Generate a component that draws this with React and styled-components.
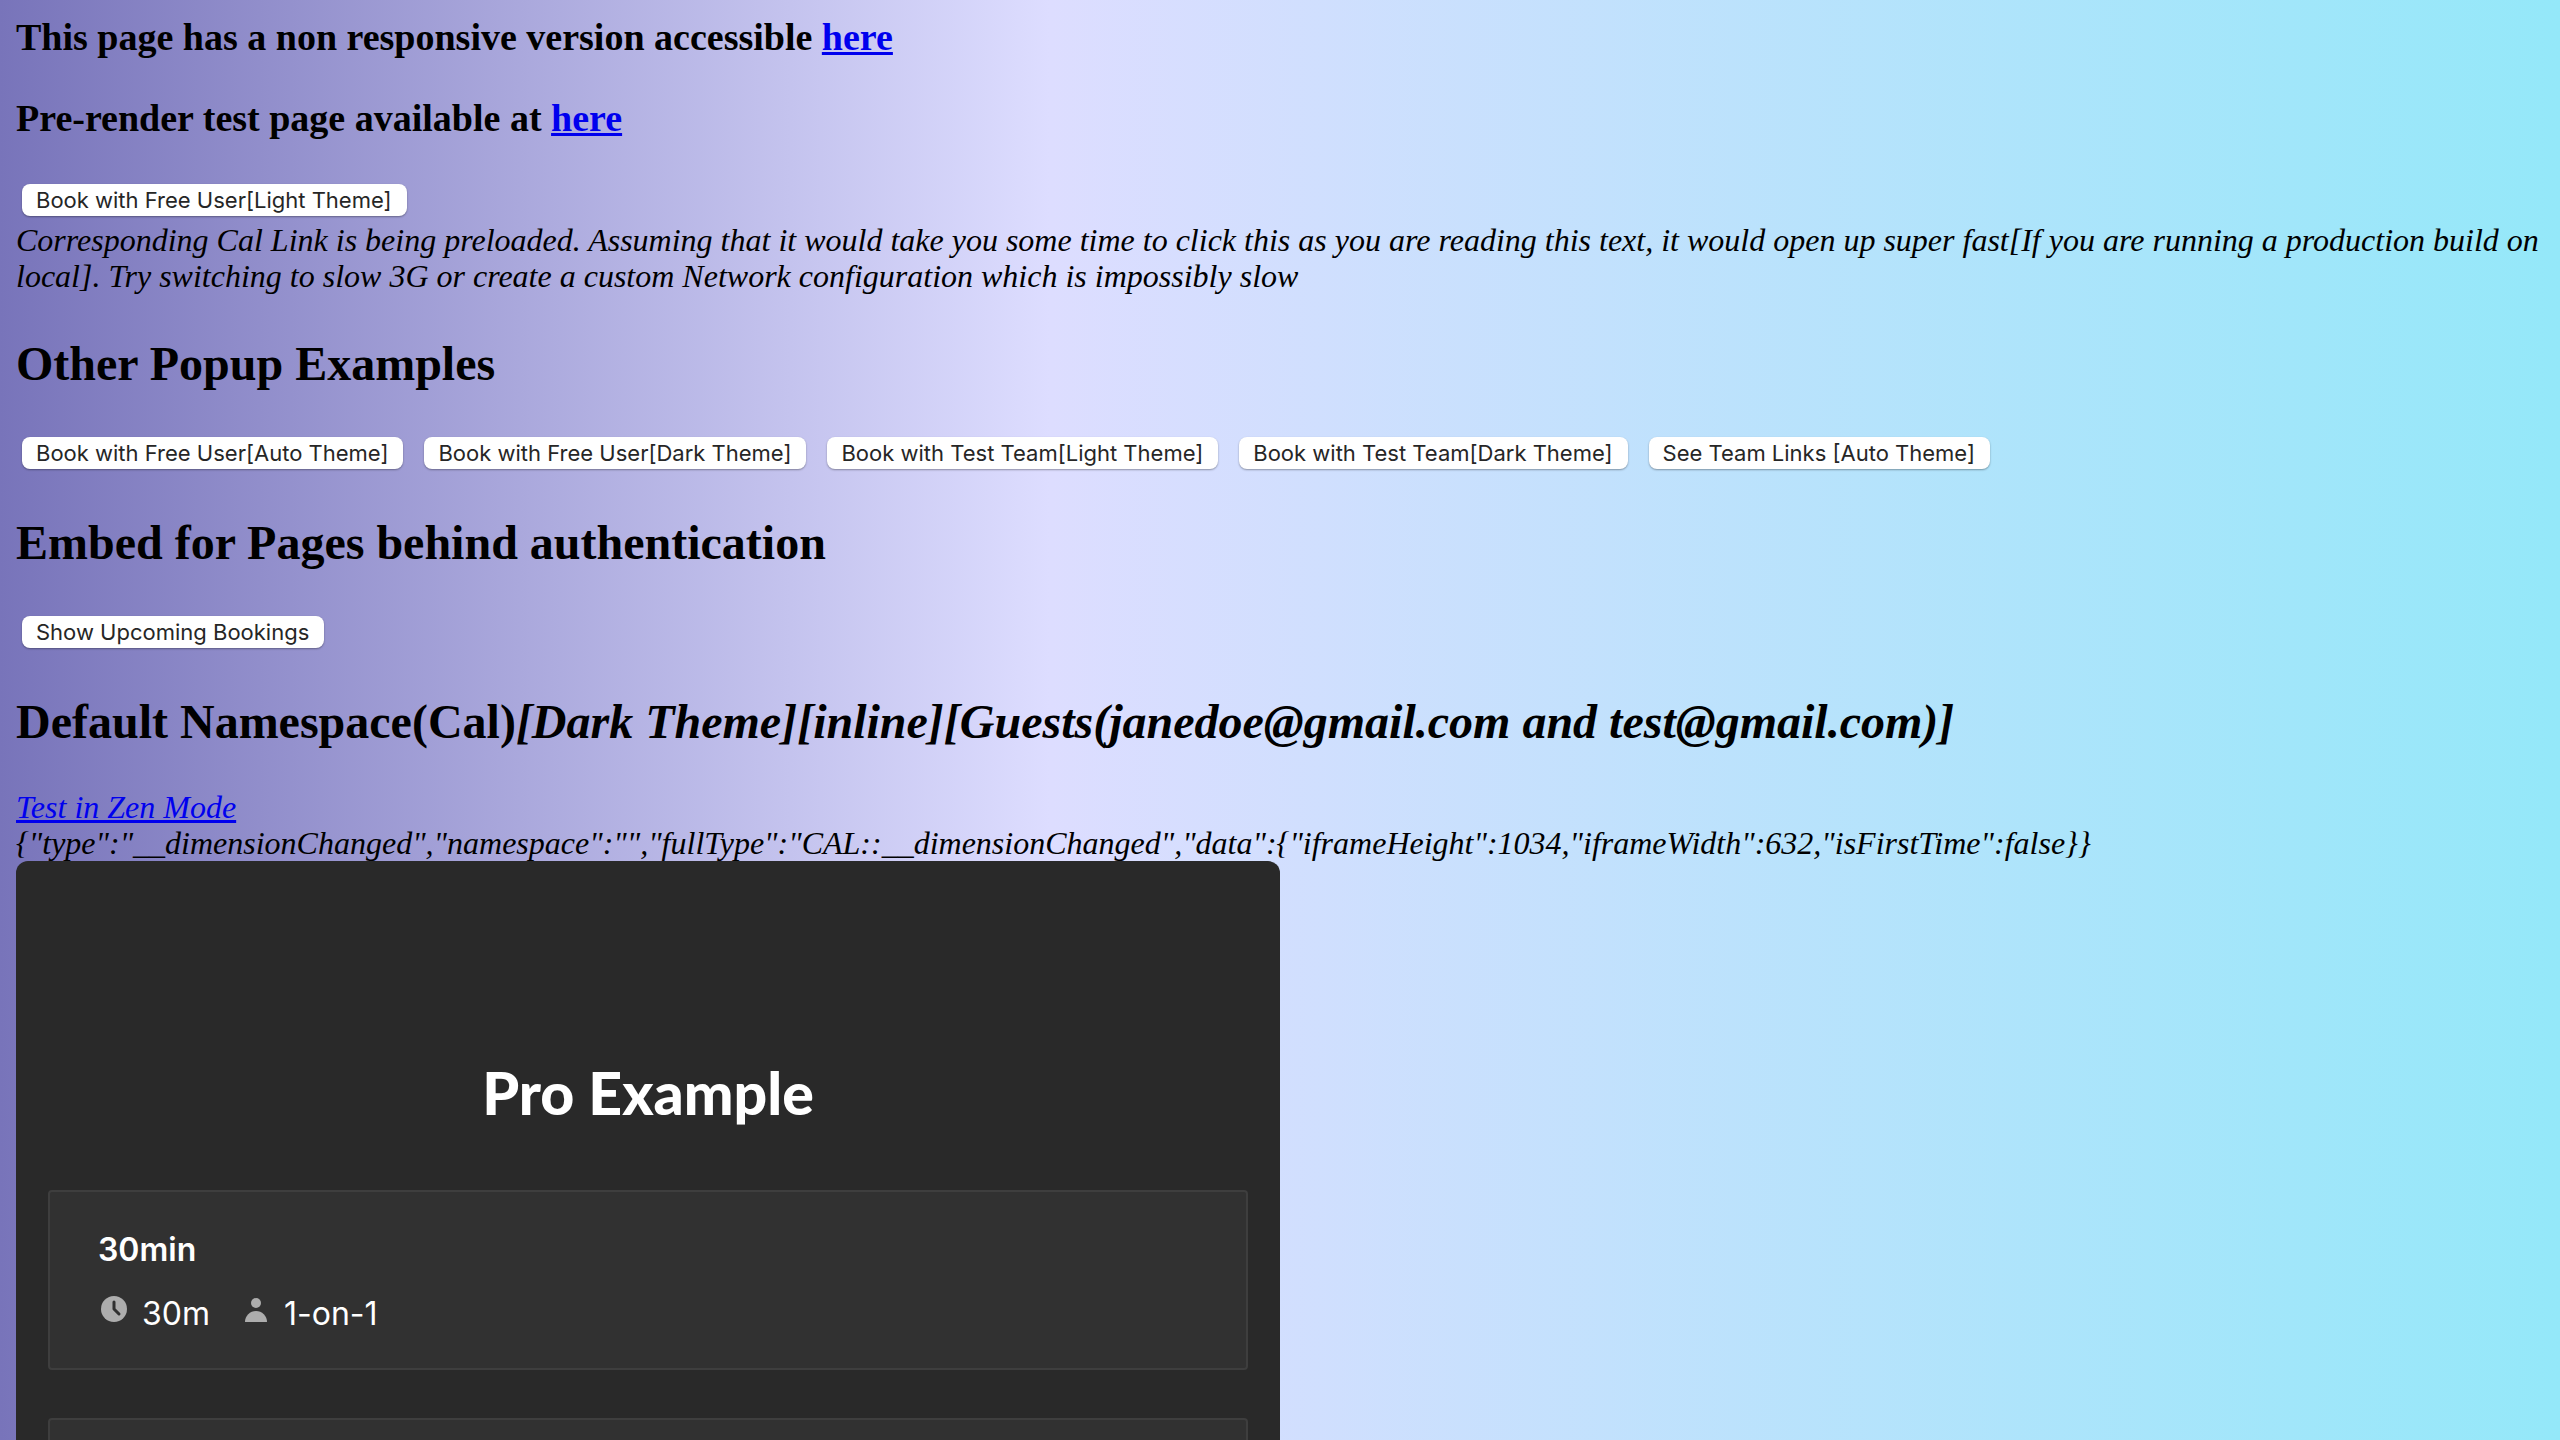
import React from "react";
import styled, { createGlobalStyle } from "styled-components";

const GlobalStyle = createGlobalStyle`
  html {
    background: linear-gradient(90deg, rgb(120, 116, 186) 0%, rgb(221, 221, 255) 41%, rgb(148, 232, 249) 100%);
    min-height: 100%;
    overflow: hidden;
  }
  body {
    margin: 0;
    color: #000;
    font-family: "Liberation Serif", "Times New Roman", serif;
    font-size: 32px;
    line-height: 36px;
  }
`;

const Page = styled.main`
  padding: 16px 16px 0;
  height: 100vh;
  box-sizing: border-box;
  overflow: hidden;
`;

const Notice = styled.h3`
  margin: 0 0 39px;
  font-size: 38px;
  line-height: 42px;
`;

const Heading = styled.h2`
  margin: 40px 0 39px;
  font-size: 48px;
  line-height: 56px;
`;

const Link = styled.a`
  color: #0000ee;
  text-decoration: underline;
`;

const ButtonRow = styled.div`
  display: flex;
  flex-wrap: wrap;
  gap: 21px;
  padding: 6px;
`;

const Button = styled.button`
  height: 32px;
  padding: 0 15px 0 14px;
  border: 0;
  border-radius: 8px;
  background: #fff;
  box-shadow: 0 1px 2px rgba(0, 0, 0, 0.35);
  color: #262626;
  font-family: Inter, sans-serif;
  font-size: 22px;
  line-height: 32px;
`;

const Note = styled.p`
  margin: 0;
  font-style: italic;
`;

const Intro = styled(Note)`
  margin-bottom: 42px;
`;

const Embed = styled.section`
  width: 50%;
  max-width: 1264px;
  box-sizing: border-box;
  padding: 196px 32px 32px;
  border-radius: 12px;
  background: #292929;
  color: #fff;
  font-family: Inter, sans-serif;
`;

const Profile = styled.h1`
  margin: 0 0 61px;
  font-family: Lato, sans-serif;
  font-size: 59px;
  font-weight: 900;
  line-height: 72px;
  text-align: center;
`;

const EventList = styled.ul`
  display: flex;
  flex-direction: column;
  gap: 48px;
  margin: 0;
  padding: 0;
  list-style: none;
`;

const EventCard = styled.li`
  min-height: 112px;
  padding: 34px 48px 30px;
  border: 2px solid #3e3e3e;
  border-radius: 4px;
  background: #313131;
`;

const EventTitle = styled.h2`
  margin: 0 0 16px;
  font-size: 32px;
  font-weight: 600;
  line-height: 48px;
`;

const Details = styled.div`
  display: flex;
  gap: 30px;
`;

const Detail = styled.span`
  display: flex;
  gap: 12px;
  font-size: 32px;
  font-weight: 400;
  line-height: 48px;
`;

const Icon = styled.svg`
  width: 32px;
  height: 32px;
  margin-top: 3px;
  fill: #adadad;
`;

const ClockIcon = () => (
  <Icon viewBox="0 0 32 32" aria-hidden="true">
    <circle cx="16" cy="16" r="13" />
    <path d="M16 9v7l5 5" fill="none" stroke="#313131" strokeWidth="3" strokeLinecap="round" strokeLinejoin="round" />
  </Icon>
);

const UserIcon = () => (
  <Icon viewBox="0 0 32 32" aria-hidden="true">
    <circle cx="16" cy="10" r="5" />
    <path d="M5 29a11 11 0 0 1 22 0z" />
  </Icon>
);

const popups = [
  "Book with Free User[Auto Theme]",
  "Book with Free User[Dark Theme]",
  "Book with Test Team[Light Theme]",
  "Book with Test Team[Dark Theme]",
  "See Team Links [Auto Theme]",
];

export default function App() {
  return (
    <>
      <GlobalStyle />
      <Page>
        <Notice>
          This page has a non responsive version accessible <Link href="#non-responsive">here</Link>
        </Notice>
        <Notice>
          Pre-render test page available at <Link href="#prerender">here</Link>
        </Notice>
        <ButtonRow>
          <Button type="button">Book with Free User[Light Theme]</Button>
        </ButtonRow>
        <Intro>
          Corresponding Cal Link is being preloaded. Assuming that it would take you some time to click this as you are
          reading this text, it would open up super fast[If you are running a production build on local]. Try switching
          to slow 3G or create a custom Network configuration which is impossibly slow
        </Intro>
        <Heading>Other Popup Examples</Heading>
        <ButtonRow>
          {popups.map((label) => (
            <Button type="button" key={label}>
              {label}
            </Button>
          ))}
        </ButtonRow>
        <Heading>Embed for Pages behind authentication</Heading>
        <ButtonRow>
          <Button type="button">Show Upcoming Bookings</Button>
        </ButtonRow>
        <Heading>
          Default Namespace(Cal)<i>[Dark Theme][inline][Guests(janedoe@gmail.com and test@gmail.com)]</i>
        </Heading>
        <Note>
          <Link href="#zen">Test in Zen Mode</Link>
        </Note>
        <Note>
          {'{"type":"__dimensionChanged","namespace":"","fullType":"CAL::__dimensionChanged","data":{"iframeHeight":1034,"iframeWidth":632,"isFirstTime":false}}'}
        </Note>
        <Embed>
          <Profile>Pro Example</Profile>
          <EventList>
            <EventCard>
              <EventTitle>30min</EventTitle>
              <Details>
                <Detail>
                  <ClockIcon />
                  30m
                </Detail>
                <Detail>
                  <UserIcon />
                  1-on-1
                </Detail>
              </Details>
            </EventCard>
            <EventCard />
          </EventList>
        </Embed>
      </Page>
    </>
  );
}
